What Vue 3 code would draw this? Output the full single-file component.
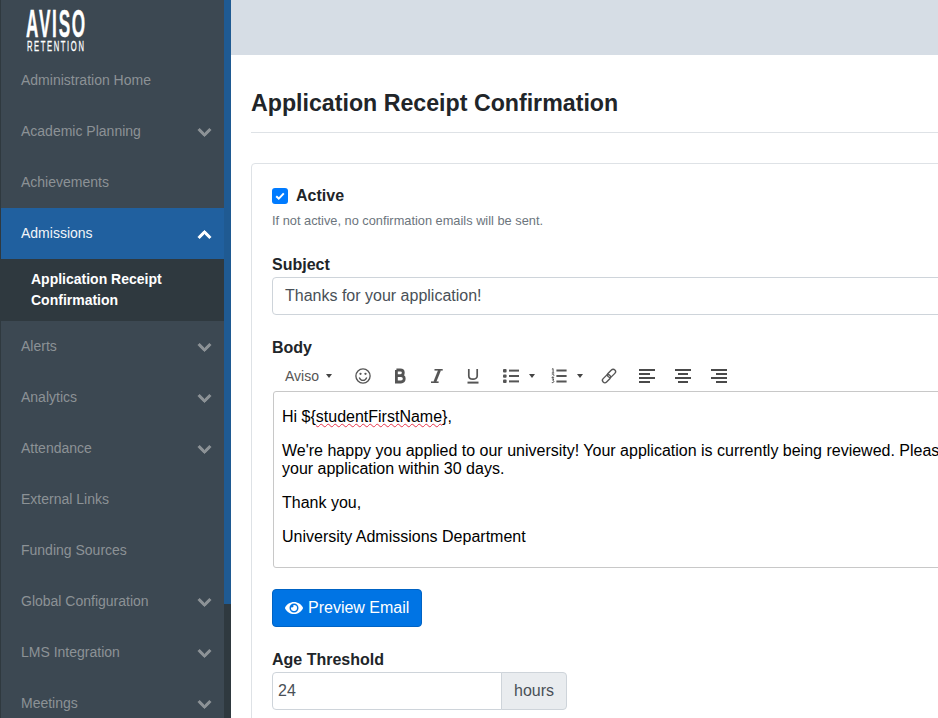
<script setup>
const upPath = 'M240.971 130.524l194.343 194.343c9.373 9.373 9.373 24.569 0 33.941l-22.667 22.667c-9.357 9.357-24.522 9.375-33.901.04L224 227.495 69.255 381.516c-9.379 9.335-24.544 9.317-33.901-.04l-22.667-22.667c-9.373-9.373-9.373-24.569 0-33.941L207.03 130.525c9.372-9.373 24.568-9.373 33.941-.001z'
const downPath = 'M207.029 381.476L12.686 187.132c-9.373-9.373-9.373-24.569 0-33.941l22.667-22.667c9.357-9.357 24.522-9.375 33.901-.04L224 284.505l154.745-154.021c9.379-9.335 24.544-9.317 33.901.04l22.667 22.667c9.373 9.373 9.373 24.569 0 33.941L240.971 381.476c-9.373 9.372-24.569 9.372-33.942 0z'
const before = [
  { label: 'Administration Home' },
  { label: 'Academic Planning', arrow: true },
  { label: 'Achievements' },
]
const after = [
  { label: 'Alerts', arrow: true },
  { label: 'Analytics', arrow: true },
  { label: 'Attendance', arrow: true },
  { label: 'External Links' },
  { label: 'Funding Sources' },
  { label: 'Global Configuration', arrow: true },
  { label: 'LMS Integration', arrow: true },
  { label: 'Meetings', arrow: true },
]
</script>

<template>
  <div class="app">
    <aside class="sidebar">
      <div class="side-col">
        <div class="logo">
          <svg width="223" height="55" viewBox="0 0 223 55">
            <text x="26" y="37" textLength="61" lengthAdjust="spacingAndGlyphs" class="logo-main">AVISO</text>
            <text x="27" y="51" textLength="58.5" lengthAdjust="spacingAndGlyphs" class="logo-sub">RETENTION</text>
          </svg>
        </div>
        <nav>
          <a v-for="i in before" :key="i.label" class="item">
            <span>{{ i.label }}</span>
            <svg v-if="i.arrow" class="chev" viewBox="0 0 448 512"><path :d="downPath" /></svg>
          </a>
          <a class="item open">
            <span>Admissions</span>
            <svg class="chev" viewBox="0 0 448 512"><path :d="upPath" /></svg>
          </a>
          <div class="sub">Application Receipt Confirmation</div>
          <a v-for="i in after" :key="i.label" class="item">
            <span>{{ i.label }}</span>
            <svg v-if="i.arrow" class="chev" viewBox="0 0 448 512"><path :d="downPath" /></svg>
          </a>
        </nav>
      </div>
      <div class="track"><div class="thumb"></div></div>
    </aside>

    <div class="main">
      <div class="topbar"></div>
      <div class="content">
        <h1 class="title">Application Receipt Confirmation</h1>
        <div class="card">
          <div class="check-row">
            <span class="check">
              <svg width="10" height="8" viewBox="0 0 10 8"><path d="M1.2 4.2 3.8 6.6 8.8 1.4" fill="none" stroke="#fff" stroke-width="2" /></svg>
            </span>
            <span class="check-label">Active</span>
          </div>
          <div class="help">If not active, no confirmation emails will be sent.</div>

          <label class="label subject-label">Subject</label>
          <div class="input subject">Thanks for your application!</div>

          <label class="label body-label">Body</label>
          <div class="toolbar">
            <span class="tb-font">Aviso</span>
            <span class="caret"></span>
            <svg class="ic smile" width="16" height="16" viewBox="0 0 18 18" fill="none" stroke="#555" stroke-width="1.5">
              <circle cx="9" cy="9" r="8" />
              <path d="M4.8 10.6c1 2.4 2.6 3.3 4.2 3.3s3.2-.9 4.2-3.3" />
              <circle cx="6.2" cy="6.6" r="1.3" fill="#555" stroke="none" />
              <circle cx="11.8" cy="6.6" r="1.3" fill="#555" stroke="none" />
            </svg>
            <svg class="ic bold" width="14" height="16" viewBox="0 0 14 16" fill="none" stroke="#555" stroke-width="2.8">
              <path d="M3.4 2h3.9c4 0 4 5.6 0 5.6H3.4m0 0h4.6c4.3 0 4.3 6.4 0 6.4H3.4zV2" />
            </svg>
            <svg class="ic italic" width="14" height="16" viewBox="0 0 14 16" fill="none" stroke="#555">
              <path d="M4.5 1.8h8.2" stroke-width="1.6" /><path d="M9.6 2 4.8 14" stroke-width="2.8" /><path d="M1 14.2h7.6" stroke-width="1.6" />
            </svg>
            <svg class="ic underline" width="14" height="16" viewBox="0 0 14 16" fill="none" stroke="#555" stroke-width="1.7">
              <path d="M2.8 1v7c0 4.2 8.4 4.2 8.4 0V1" /><path d="M1.5 14.6h11" stroke-width="2" />
            </svg>
            <svg class="ic ul" width="16" height="16" viewBox="0 0 16 16" fill="#555">
              <rect x="0" y="1" width="3.6" height="3.4" rx="1" /><rect x="0" y="6.4" width="3.6" height="3.4" rx="1" /><rect x="0" y="11.6" width="3.6" height="3.4" rx="1" />
              <rect x="6" y="1.6" width="10" height="2" /><rect x="6" y="7" width="10" height="2" /><rect x="6" y="12.4" width="10" height="2" />
            </svg>
            <span class="caret list-caret"></span>
            <svg class="ic ol" width="16" height="16" viewBox="0 0 16 16" fill="none" stroke="#555" stroke-width="1">
              <path d="M.9 1.2 2.1.6v4.2M.8 5h2.4" /><path d="M.8 6.8c.6-1 2.3-.7 2.1.5-.1.8-1.4 1.4-2 2.4h2.2" />
              <path d="M.9 11h2L1.8 12.4c1.6 0 1.6 2.6-1 2.2" />
              <path d="M5.4 2.4h10.2M5.4 8h10.2M5.4 13.6h10.2" stroke-width="2" />
            </svg>
            <span class="caret list-caret"></span>
            <svg class="ic link" width="16" height="16" viewBox="0 0 16 16" fill="none" stroke="#555" stroke-width="1.4">
              <rect x="8.1" y="0.6" width="4.8" height="9.4" rx="2.4" transform="rotate(45 10.5 5.3)" />
              <rect x="3.1" y="6" width="4.8" height="9.4" rx="2.4" transform="rotate(45 5.5 10.7)" />
            </svg>
            <svg class="ic al" width="16" height="14" viewBox="0 0 16 14" fill="#4a4a4a">
              <rect y="0" width="16" height="2" /><rect y="4" width="11" height="2" /><rect y="8" width="16" height="2" /><rect y="12" width="11" height="2" />
            </svg>
            <svg class="ic ac" width="16" height="14" viewBox="0 0 16 14" fill="#4a4a4a">
              <rect y="0" width="16" height="2" /><rect x="3" y="4" width="10" height="2" /><rect y="8" width="16" height="2" /><rect x="3" y="12" width="10" height="2" />
            </svg>
            <svg class="ic ar" width="16" height="14" viewBox="0 0 16 14" fill="#4a4a4a">
              <rect y="0" width="16" height="2" /><rect x="5" y="4" width="11" height="2" /><rect y="8" width="16" height="2" /><rect x="5" y="12" width="11" height="2" />
            </svg>
          </div>
          <div class="editor">
            <p>Hi ${<span class="typo">studentFirstName</span>},</p>
            <p>We're happy you applied to our university! Your application is currently being reviewed. Please check the status of<br />your application within 30 days.</p>
            <p>Thank you,</p>
            <p>University Admissions Department</p>
          </div>

          <button class="btn">
            <svg width="18" height="16" viewBox="0 0 576 512" fill="#fff"><path d="M572.52 241.4C518.29 135.59 410.93 64 288 64S57.68 135.64 3.48 241.41a32.35 32.35 0 0 0 0 29.19C57.71 376.41 165.07 448 288 448s230.32-71.64 284.52-177.41a32.35 32.35 0 0 0 0-29.19zM288 400a144 144 0 1 1 144-144 143.93 143.93 0 0 1-144 144zm0-240a95.31 95.31 0 0 0-25.31 3.79 47.85 47.85 0 0 1-66.9 66.9A95.78 95.78 0 1 0 288 160z" /></svg>
            <span>Preview Email</span>
          </button>

          <label class="label age-label">Age Threshold</label>
          <div class="group">
            <div class="group-input">24</div>
            <div class="addon">hours</div>
          </div>
        </div>
      </div>
    </div>
  </div>
</template>

<style>
html, body { margin: 0; overflow: hidden; background: #fff; }
</style>

<style scoped>
.app {
  display: flex;
  width: 938px;
  height: 718px;
  overflow: hidden;
  font-family: "Liberation Sans", Arial, sans-serif;
  color: #212529;
}
.sidebar {
  flex: 0 0 231px;
  display: flex;
  height: 718px;
  overflow: hidden;
  background: #3c4852;
}
.side-col {
  width: 223px;
  border-left: 1px solid #2f393f;
  flex: none;
}
.logo { height: 55px; }
.logo svg { display: block; margin-left: -1px; }
.logo-main { font: 700 39px "Liberation Sans", sans-serif; letter-spacing: 4px; fill: #fff; stroke: #fff; stroke-width: 0.4px; }
.logo-sub { font: 400 14px "Liberation Sans", sans-serif; letter-spacing: 3px; fill: #fff; stroke: #fff; stroke-width: 0.3px; }
.item {
  height: 51px;
  box-sizing: border-box;
  display: flex;
  align-items: center;
  justify-content: space-between;
  padding: 0 13px 2px 20px;
  font-size: 14px;
  color: #8c9296;
}
.item.open { background: #20609f; color: #f2f5f8; }
.chev { width: 13px; height: 15px; fill: #8c9296; stroke: #8c9296; stroke-width: 34px; overflow: visible; margin-top: 4px; }
.open .chev { fill: #fff; stroke: #fff; }
.sub {
  background: #2f393f;
  color: #fff;
  font-weight: 700;
  font-size: 14px;
  line-height: 21px;
  height: 62px;
  padding: 10px 20px 0 30px;
  box-sizing: border-box;
}
.track { width: 7px; flex: none; background: #2f393f; height: 718px; }
.thumb { height: 604px; background: #1f5a92; }
.main { flex: 0 0 1100px; }
.topbar { height: 55px; background: #d6dde5; }
.content { padding: 0 20px; }
.title {
  margin: 0;
  height: 78px;
  box-sizing: border-box;
  padding-top: 33px;
  font-size: 23.2px;
  line-height: 30px;
  font-weight: 700;
  border-bottom: 1px solid #dee2e6;
}
.card {
  margin-top: 30px;
  border: 1px solid #dee2e6;
  border-radius: 4px;
  padding: 24px 20px 0;
  height: 700px;
}
.check-row { display: flex; align-items: center; height: 16px; }
.check {
  width: 16px;
  height: 16px;
  border-radius: 3px;
  background: #007bff;
  display: flex;
  align-items: center;
  justify-content: center;
  margin-right: 8px;
}
.check-label { font-weight: 700; font-size: 16px; }
.help { margin-top: 9px; font-size: 12.8px; line-height: 16px; color: #6c757d; }
.label { display: block; font-weight: 700; font-size: 16px; line-height: 18px; }
.subject-label { margin-top: 27px; }
.input {
  margin-top: 3px;
  height: 38px;
  box-sizing: border-box;
  border: 1px solid #ced4da;
  border-radius: 4px;
  padding: 0 12px;
  line-height: 35px;
  font-size: 16px;
  color: #495057;
}
.body-label { margin-top: 24px; }
.toolbar {
  display: flex;
  align-items: center;
  height: 30px;
  margin-top: 4px;
  padding-left: 13px;
  font-size: 14px;
  color: #555;
}
.tb-font { width: 41px; }
.caret {
  width: 0;
  height: 0;
  border-left: 3.5px solid transparent;
  border-right: 3.5px solid transparent;
  border-top: 4px solid #444;
}
.ic { flex: none; }
.smile { margin-left: 23px; }
.bold { margin-left: 22px; }
.italic { margin-left: 23px; }
.underline { margin-left: 22px; }
.ul { margin-left: 23px; }
.list-caret { margin-left: 10px; }
.ol { margin-left: 16px; }
.ol + .list-caret { margin-left: 10px; }
.link { margin-left: 18px; }
.al { margin-left: 22px; }
.ac { margin-left: 20px; }
.ar { margin-left: 20px; }
.editor {
  height: 177px;
  box-sizing: border-box;
  margin-left: 1px;
  border: 1px solid #c8c8c8;
  border-radius: 3px;
  padding: 16px 8px 0;
  font-size: 16px;
  line-height: 18px;
  color: #000;
  white-space: nowrap;
  overflow: hidden;
}
.editor p { margin: 0 0 16px; }
.typo { text-decoration: underline wavy #e8334a 1px; text-underline-offset: 1px; }
.btn {
  display: flex;
  align-items: center;
  gap: 5px;
  margin-top: 21px;
  width: 150px;
  height: 38px;
  padding: 0 0 0 12px;
  box-sizing: border-box;
  background: #0074e4;
  border: 1px solid #0063c4;
  border-radius: 4px;
  color: #fff;
  font: 16px "Liberation Sans", sans-serif;
}
.age-label { margin-top: 24px; }
.group { display: flex; width: 295px; height: 38px; margin-top: 3px; font-size: 16px; color: #495057; }
.group-input {
  flex: 1;
  box-sizing: border-box;
  border: 1px solid #ced4da;
  border-radius: 4px 0 0 4px;
  padding-left: 5px;
  line-height: 35px;
}
.addon {
  width: 66px;
  box-sizing: border-box;
  margin-left: -1px;
  border: 1px solid #ced4da;
  border-radius: 0 4px 4px 0;
  background: #e9ecef;
  text-align: center;
  line-height: 35px;
}
</style>
